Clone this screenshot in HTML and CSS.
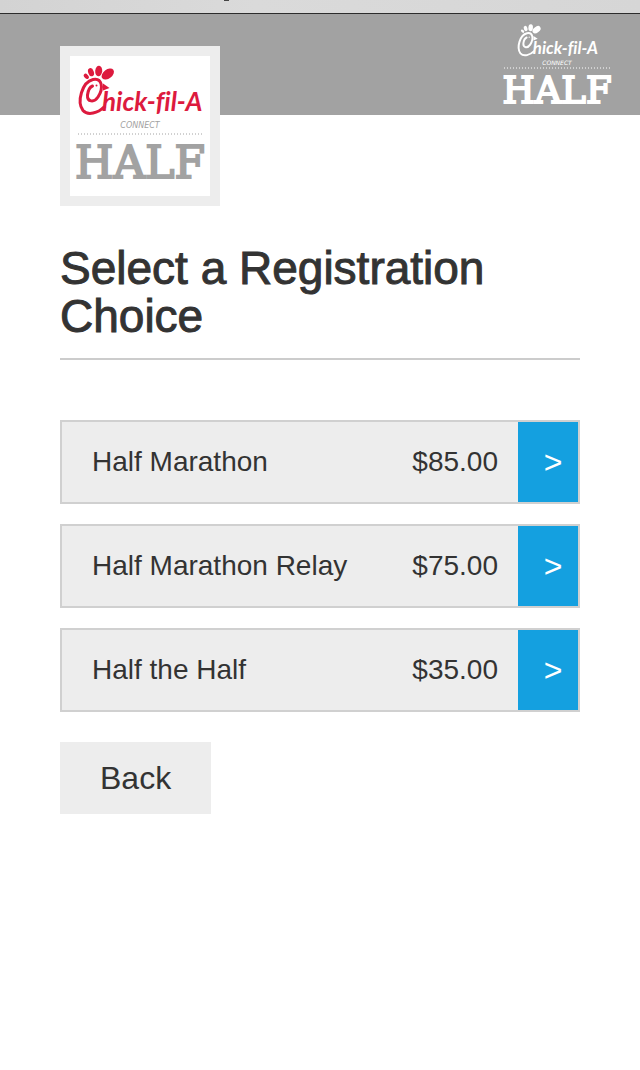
FILE: index.html
```
<!DOCTYPE html>
<html lang="en">
<head>
    <meta charset="UTF-8">
    <meta name="viewport" content="width=device-width, initial-scale=1">
    <title>Select a Registration Choice</title>
    <link rel="stylesheet" href="styles.css">
</head>
<body>
    <div class="browser-bar"></div>
    <header class="site-header">
        <div class="event-logo">
            <svg viewBox="0 0 140 140" role="img" aria-label="Chick-fil-A Connect Half">
                <defs>
                    <g id="brand">
                        <ellipse cx="16.3" cy="20.3" rx="2" ry="3" transform="rotate(-45 16.3 20.3)"/>
                        <ellipse cx="21" cy="16.2" rx="2.8" ry="4.2" transform="rotate(-20 21 16.2)"/>
                        <ellipse cx="28.7" cy="15" rx="3.5" ry="5.3" transform="rotate(5 28.7 15)"/>
                        <ellipse cx="37.8" cy="18" rx="7" ry="4.5" transform="rotate(-38 37.8 18)"/>
                        <path class="brand-line" d="M34 51C28 57 18 60 13 54.500C6.500 46 12 26 23 23.500C32 21.500 34 32 28 41C24 47 17 46 17.500 39C18 35 20 31 22.500 30"/>
                        <path d="M33 27.500L39.500 32L33 34.500Z"/>
                        <circle cx="26.500" cy="29.500" r="1"/>
                        <text class="brand-name" x="32" y="55">hick-fil-A</text>
                    </g>
                </defs>
                <use class="red" href="#brand"/>
                <text class="connect" x="70" y="72">CONNECT</text>
                <line class="dots" x1="8" y1="78" x2="133" y2="78"/>
                <text class="half" x="70" y="122">HALF</text>
            </svg>
        </div>
        <svg class="header-logo" viewBox="0 0 114 90" role="img" aria-label="Chick-fil-A Connect Half">
            <use href="#brand" transform="translate(12 -2) scale(.65)"/>
            <text class="connect connect-small" x="57" y="45">CONNECT</text>
            <line class="dots" x1="4" y1="48" x2="111" y2="48"/>
            <text class="half half-small" x="57" y="83">HALF</text>
        </svg>
    </header>
    <main>
        <h1>Select a Registration Choice</h1>
        <ul class="choices">
            <li>
                <a class="choice" href="#">
                    <span class="name">Half Marathon</span>
                    <span class="price">$85.00</span>
                    <span class="arrow">&gt;</span>
                </a>
            </li>
            <li>
                <a class="choice" href="#">
                    <span class="name">Half Marathon Relay</span>
                    <span class="price">$75.00</span>
                    <span class="arrow">&gt;</span>
                </a>
            </li>
            <li>
                <a class="choice" href="#">
                    <span class="name">Half the Half</span>
                    <span class="price">$35.00</span>
                    <span class="arrow">&gt;</span>
                </a>
            </li>
        </ul>
        <button type="button" class="back-btn">Back</button>
    </main>
</body>
</html>
```
FILE: styles.css
```
body, h1, ul, button {
    margin: 0;
    padding: 0;
    box-sizing: border-box;
}

body {
    font-family: "Helvetica Neue", "Liberation Sans", Arial, sans-serif;
    background-color: #fff;
    color: #333;
}

.browser-bar {
    position: relative;
    height: 13px;
    background: linear-gradient(to right, #d3d3d3, #dadada 40%, #d6d6d6);
    border-bottom: 1px solid #2c2c2c;
}

/* tail of the address text */
.browser-bar::after {
    content: "";
    position: absolute;
    top: 0;
    left: 224px;
    width: 5px;
    height: 1px;
    background-color: #444;
}

.site-header {
    display: flex;
    justify-content: space-between;
    align-items: flex-start;
    height: 101px;
    padding: 0 26px 0 60px;
    box-sizing: border-box;
    background-color: #a2a2a2;
}

.event-logo {
    width: 140px;
    height: 140px;
    margin-top: 32px;
    border: 10px solid #ededed;
    background-color: #fff;
    color: #a2a2a2;
}

.event-logo svg {
    display: block;
}

.header-logo {
    width: 114px;
    height: 90px;
    margin-top: 6px;
    color: #fff;
}

svg {
    overflow: visible;
    fill: currentColor;
}

.red {
    color: #dd1a3e;
    fill: #dd1a3e;
}

.brand-line {
    fill: none;
    stroke: currentColor;
    stroke-width: 3;
    stroke-linecap: round;
}

.brand-name {
    font: italic bold 26px Lato, sans-serif;
    font-variant-ligatures: none;
}

.connect {
    font: italic 8px "DejaVu Sans", sans-serif;
    text-anchor: middle;
}

.connect-small {
    font-size: 6px;
}

.dots {
    stroke: currentColor;
    stroke-width: 1;
    stroke-dasharray: 1 2;
}

.half {
    font: 44px "DejaVu Serif", serif;
    text-anchor: middle;
    stroke: currentColor;
    stroke-width: 2;
}

.half-small {
    font-size: 37px;
}

main {
    padding: 129px 60px 60px;
}

h1 {
    padding-bottom: 18px;
    border-bottom: 2px solid #ccc;
    font-size: 46px;
    font-weight: normal;
    line-height: 48px;
    -webkit-text-stroke: 1px #333;
}

.choices {
    display: grid;
    gap: 20px;
    margin: 60px 0 30px;
    list-style: none;
}

.choice {
    display: flex;
    border: 2px solid #d0d0d0;
    background-color: #ededed;
    color: #333;
    font-size: 28px;
    line-height: 80px;
    text-decoration: none;
}

.name {
    flex: 1;
    padding-left: 30px;
}

.price {
    padding-right: 20px;
}

.arrow {
    width: 60px;
    padding-left: 10px;
    box-sizing: border-box;
    background-color: #14a0e0;
    color: #fff;
    font-size: 32px;
    text-align: center;
}

.back-btn {
    height: 72px;
    padding: 0 40px;
    border: none;
    background-color: #ededed;
    color: #333;
    font-family: inherit;
    font-size: 32px;
    cursor: pointer;
}
```
